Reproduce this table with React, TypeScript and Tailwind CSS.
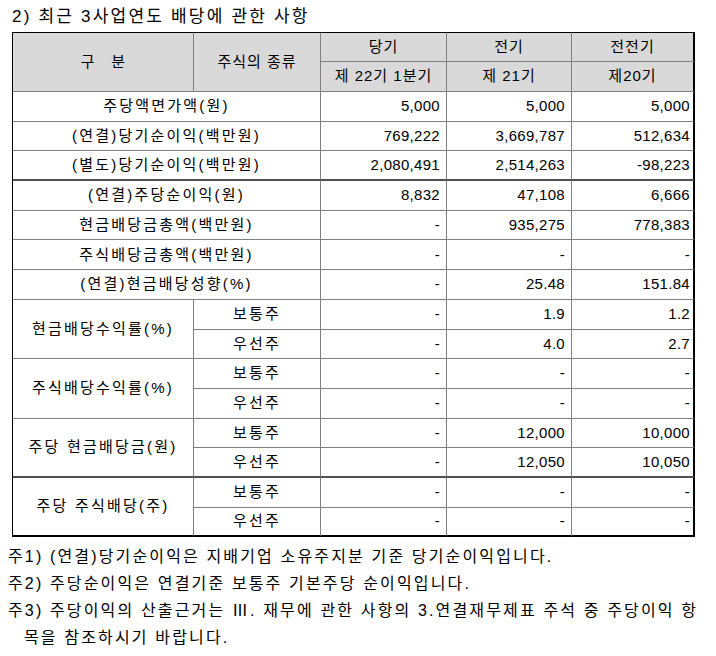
import React from "react";

const F = { fontFamily: '"Liberation Sans", "Noto Sans CJK KR", sans-serif' } as React.CSSProperties;

type Row = { label: string; sub?: string; vals: string[]; span?: number; thick?: boolean; last?: boolean; skipLabel?: boolean };

const rows: Row[] = [
  { label: "주당액면가액(원)", vals: ["5,000", "5,000", "5,000"] },
  { label: "(연결)당기순이익(백만원)", vals: ["769,222", "3,669,787", "512,634"] },
  { label: "(별도)당기순이익(백만원)", vals: ["2,080,491", "2,514,263", "-98,223"], thick: true },
  { label: "(연결)주당순이익(원)", vals: ["8,832", "47,108", "6,666"] },
  { label: "현금배당금총액(백만원)", vals: ["-", "935,275", "778,383"] },
  { label: "주식배당금총액(백만원)", vals: ["-", "-", "-"] },
  { label: "(연결)현금배당성향(%)", vals: ["-", "25.48", "151.84"] },
  { label: "현금배당수익률(%)", sub: "보통주", span: 2, vals: ["-", "1.9", "1.2"] },
  { label: "", sub: "우선주", skipLabel: true, vals: ["-", "4.0", "2.7"] },
  { label: "주식배당수익률(%)", sub: "보통주", span: 2, vals: ["-", "-", "-"] },
  { label: "", sub: "우선주", skipLabel: true, vals: ["-", "-", "-"] },
  { label: "주당 현금배당금(원)", sub: "보통주", span: 2, vals: ["-", "12,000", "10,000"] },
  { label: "", sub: "우선주", skipLabel: true, vals: ["-", "12,050", "10,050"], thick: true },
  { label: "주당 주식배당(주)", sub: "보통주", span: 2, vals: ["-", "-", "-"] },
  { label: "", sub: "우선주", skipLabel: true, vals: ["-", "-", "-"], last: true },
];

export default function App() {
  return (
    <div className="w-[716px] h-[656px] bg-white text-black" style={F}>
      <div className="h-[32px] pl-[12px] flex items-center text-[17px] tracking-[2.2px] leading-none">
        2) 최근 3사업연도 배당에 관한 사항
      </div>
      <table className="ml-[12px] w-[682px] border-separate border-spacing-0 border-l border-t border-black table-fixed text-[15px]">
        <colgroup>
          <col className="w-[181px]" />
          <col className="w-[127px]" />
          <col className="w-[126px]" />
          <col className="w-[125px]" />
          <col className="w-[123px]" />
        </colgroup>
        <thead>
          <tr className="h-[29px] bg-[#d9d9d9]">
            <th rowSpan={2} className="font-normal border-r border-b border-[#808080] text-center">
              구&nbsp;&nbsp;&nbsp;&nbsp;분
            </th>
            <th rowSpan={2} className="font-normal border-r border-b border-[#808080] text-center tracking-[1px]">
              주식의 종류
            </th>
            <th className="font-normal border-r border-b border-[#808080] text-center tracking-[1px]">당기</th>
            <th className="font-normal border-r border-b border-[#808080] text-center tracking-[1px]">전기</th>
            <th className="font-normal border-b border-[#808080] border-r-2 border-r-black text-center tracking-[1px]">전전기</th>
          </tr>
          <tr className="h-[30px] bg-[#d9d9d9]">
            <th className="font-normal border-r border-b border-[#808080] text-center tracking-[1px]">제 22기 1분기</th>
            <th className="font-normal border-r border-b border-[#808080] text-center tracking-[1px]">제 21기</th>
            <th className="font-normal border-b border-[#808080] border-r-2 border-r-black text-center tracking-[1px]">제20기</th>
          </tr>
        </thead>
        <tbody>
          {rows.map((r, i) => {
            const b = r.last
              ? "border-b-2 border-b-black"
              : r.thick
              ? "border-b-2 border-b-[#505050]"
              : "border-b border-b-[#808080]";
            const spanB = rows[i + 1]?.last
              ? "border-b-2 border-b-black"
              : rows[i + 1]?.thick
              ? "border-b-2 border-b-[#505050]"
              : "border-b border-b-[#808080]";
            return (
              <tr key={i} className="h-[29.7px]">
                {!r.sub && (
                  <td colSpan={2} className={`border-r border-r-[#808080] ${b} text-center tracking-[2.2px]`}>
                    {r.label}
                  </td>
                )}
                {r.sub && !r.skipLabel && (
                  <td rowSpan={2} className={`border-r border-r-[#808080] ${spanB} text-center tracking-[2.2px]`}>
                    {r.label}
                  </td>
                )}
                {r.sub && (
                  <td className={`border-r border-r-[#808080] ${b} text-center tracking-[2.2px]`}>{r.sub}</td>
                )}
                <td className={`border-r border-r-[#808080] ${b} text-right pr-[6px] tracking-[0.3px]`}>{r.vals[0]}</td>
                <td className={`border-r border-r-[#808080] ${b} text-right pr-[6px] tracking-[0.3px]`}>{r.vals[1]}</td>
                <td className={`border-r-2 border-r-black ${b} text-right pr-[3px] tracking-[0.3px]`}>{r.vals[2]}</td>
              </tr>
            );
          })}
        </tbody>
      </table>
      <div className="mt-[6px] pl-[8px] text-[16px] leading-[27px] tracking-[2.15px] whitespace-nowrap">
        <div>주1) (연결)당기순이익은 지배기업 소유주지분 기준 당기순이익입니다.</div>
        <div>주2) 주당순이익은 연결기준 보통주 기본주당 순이익입니다.</div>
        <div>주3) 주당이익의 산출근거는 Ⅲ. 재무에 관한 사항의 3.연결재무제표 주석 중 주당이익 항</div>
        <div className="pl-[16px]">목을 참조하시기 바랍니다.</div>
      </div>
    </div>
  );
}
